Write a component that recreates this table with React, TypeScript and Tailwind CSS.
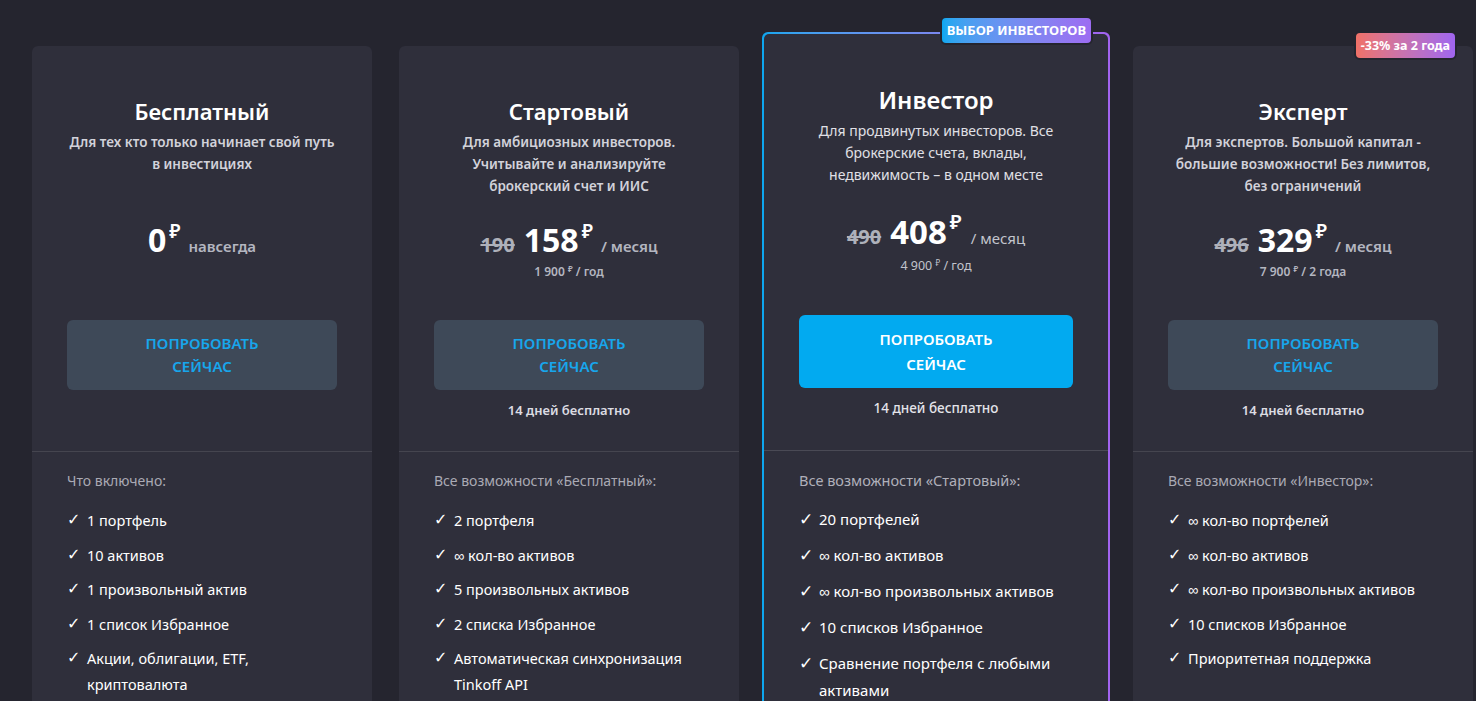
import { Fragment } from "react";

type Plan = {
  name: string;
  desc: string[];
  oldPrice?: string;
  price: string;
  period: string;
  annual?: { sum: string; label: string };
  trial: boolean;
  listTitle: string;
  features: string[][];
  badge?: "discount";
};

const plans: Plan[] = [
  {
    name: "Бесплатный",
    desc: ["Для тех кто только начинает свой путь", "в инвестициях"],
    price: "0",
    period: "навсегда",
    trial: false,
    listTitle: "Что включено:",
    features: [
      ["1 портфель"],
      ["10 активов"],
      ["1 произвольный актив"],
      ["1 список Избранное"],
      ["Акции, облигации, ETF,", "криптовалюта"],
    ],
  },
  {
    name: "Стартовый",
    desc: [
      "Для амбициозных инвесторов.",
      "Учитывайте и анализируйте",
      "брокерский счет и ИИС",
    ],
    oldPrice: "190",
    price: "158",
    period: "/ месяц",
    annual: { sum: "1 900", label: "/ год" },
    trial: true,
    listTitle: "Все возможности «Бесплатный»:",
    features: [
      ["2 портфеля"],
      ["∞ кол-во активов"],
      ["5 произвольных активов"],
      ["2 списка Избранное"],
      ["Автоматическая синхронизация", "Tinkoff API"],
    ],
  },
  {
    name: "Эксперт",
    desc: [
      "Для экспертов. Большой капитал -",
      "большие возможности! Без лимитов,",
      "без ограничений",
    ],
    oldPrice: "496",
    price: "329",
    period: "/ месяц",
    annual: { sum: "7 900", label: "/ 2 года" },
    trial: true,
    listTitle: "Все возможности «Инвестор»:",
    features: [
      ["∞ кол-во портфелей"],
      ["∞ кол-во активов"],
      ["∞ кол-во произвольных активов"],
      ["10 списков Избранное"],
      ["Приоритетная поддержка"],
    ],
    badge: "discount",
  },
];

const featured: Plan = {
  name: "Инвестор",
  desc: [
    "Для продвинутых инвесторов. Все",
    "брокерские счета, вклады,",
    "недвижимость – в одном месте",
  ],
  oldPrice: "490",
  price: "408",
  period: "/ месяц",
  annual: { sum: "4 900", label: "/ год" },
  trial: true,
  listTitle: "Все возможности «Стартовый»:",
  features: [
    ["20 портфелей"],
    ["∞ кол-во активов"],
    ["∞ кол-во произвольных активов"],
    ["10 списков Избранное"],
    ["Сравнение портфеля с любыми", "активами"],
  ],
};

function Lines({ lines }: { lines: string[] }) {
  return (
    <>
      {lines.map((l, i) => (
        <Fragment key={i}>
          {i > 0 && <br />}
          {l}
        </Fragment>
      ))}
    </>
  );
}

function PlanCard({ plan }: { plan: Plan }) {
  return (
    <div className="relative w-[340px] shrink-0 rounded-md bg-[#2f2f3b]">
      {plan.badge === "discount" && (
        <div className="absolute -top-[15px] right-[16px] rounded-md border-2 border-[#25252f] bg-gradient-to-r from-[#f07167] to-[#a065f0] px-[5px] py-[4px] text-[12.5px] font-bold leading-[17px] text-white">
          -33% за 2 года
        </div>
      )}

      <div className="flex h-[405px] flex-col items-center px-[35px] pt-[51px] text-center">
        <h3 className="text-[22px] font-semibold leading-[28px] text-white">
          {plan.name}
        </h3>
        <p className="mt-[6px] h-[66px] text-[13.5px] font-semibold leading-[22px] text-[#d2d2da]">
          <Lines lines={plan.desc} />
        </p>

        <div className="mt-[23px] flex h-[40px] items-baseline justify-center">
          {plan.oldPrice && (
            <span className="mr-[9px] text-[20px] font-bold text-[#aeb1ba] line-through">
              {plan.oldPrice}
            </span>
          )}
          <span className="text-[32px] font-bold leading-[40px] text-white">
            {plan.price}
          </span>
          <span className="relative -top-[14px] ml-[3px] text-[19px] font-semibold leading-none text-white">
            ₽
          </span>
          <span className="ml-[8px] text-[15px] font-semibold text-[#b4b6c0]">
            {plan.period}
          </span>
        </div>
        {plan.annual ? (
          <div className="mt-[4px] h-[16px] text-[12px] font-semibold leading-[16px] text-[#b4b6c0]">
            {plan.annual.sum}{" "}
            <span className="relative -top-[4px] text-[8px]">₽</span>{" "}
            {plan.annual.label}
          </div>
        ) : (
          <div className="mt-[4px] h-[16px]" />
        )}

        <button className="mt-[40px] h-[70px] w-full rounded-md bg-[#3e4958] text-[15px] font-semibold leading-[23px] text-[#17a6ec]">
          ПОПРОБОВАТЬ
          <br />
          СЕЙЧАС
        </button>
        {plan.trial && (
          <div className="mt-[10px] text-[13px] font-semibold leading-[20px] text-[#dcdce2]">
            14 дней бесплатно
          </div>
        )}
      </div>

      <div className="border-t border-[#45454f] px-[35px] pb-[60px] pt-[19px]">
        <div className="text-[14px] leading-[20px] text-[#aaaab4]">
          {plan.listTitle}
        </div>
        <ul className="mt-[16px] flex flex-col gap-[8.5px]">
          {plan.features.map((f, i) => (
            <li
              key={i}
              className="flex text-[14.5px] leading-[26px] text-white"
            >
              <span className="w-[20px] shrink-0 font-['DejaVu_Sans',sans-serif] text-[16px]">
                ✓
              </span>
              <span>
                <Lines lines={f} />
              </span>
            </li>
          ))}
        </ul>
      </div>
    </div>
  );
}

function FeaturedCard({ plan }: { plan: Plan }) {
  return (
    <div className="relative -mx-[4px] -mt-[14px] w-[348px] shrink-0 rounded-md bg-gradient-to-r from-[#0aa6ee] to-[#a263f0] p-[2px]">
      <div className="absolute -top-[16px] right-[17px] rounded-md border-2 border-[#25252f] bg-gradient-to-r from-[#0aa8f0] to-[#9d6cf2] px-[5px] py-[4px] text-[13px] font-bold leading-[17px] text-white">
        ВЫБОР ИНВЕСТОРОВ
      </div>

      <div className="rounded-[5px] bg-[#2f2f3b]">
        <div className="flex h-[416px] flex-col items-center px-[35px] pt-[51px] text-center">
          <h3 className="text-[24px] font-semibold leading-[30px] text-white">
            {plan.name}
          </h3>
          <p className="mt-[5px] h-[66px] text-[14px] font-normal leading-[22px] text-[#e0e0e6]">
            <Lines lines={plan.desc} />
          </p>

          <div className="mt-[25px] flex h-[42px] items-baseline justify-center">
            <span className="mr-[9px] text-[20px] font-bold text-[#aeb1ba] line-through">
              {plan.oldPrice}
            </span>
            <span className="text-[33px] font-bold leading-[42px] text-white">
              {plan.price}
            </span>
            <span className="relative -top-[15px] ml-[3px] text-[20px] font-semibold leading-none text-white">
              ₽
            </span>
            <span className="ml-[9px] text-[15px] text-[#c2c4cc]">
              {plan.period}
            </span>
          </div>
          <div className="mt-[5px] h-[16px] text-[12.5px] leading-[16px] text-[#c2c4cc]">
            {plan.annual?.sum}{" "}
            <span className="relative -top-[4px] text-[8px]">₽</span>{" "}
            {plan.annual?.label}
          </div>

          <button className="mt-[41px] h-[73px] w-full rounded-md bg-[#02aaf0] text-[15px] font-semibold leading-[25px] text-white">
            ПОПРОБОВАТЬ
            <br />
            СЕЙЧАС
          </button>
          <div className="mt-[10px] text-[13.5px] font-medium leading-[20px] text-[#e4e4ea]">
            14 дней бесплатно
          </div>
        </div>

        <div className="border-t border-[#4a4a55] px-[35px] pb-[60px] pt-[19px]">
          <div className="text-[14.5px] leading-[20px] text-[#b0b0ba]">
            {plan.listTitle}
          </div>
          <ul className="mt-[16px] flex flex-col gap-[9px]">
            {plan.features.map((f, i) => (
              <li
                key={i}
                className="flex text-[15px] leading-[27px] text-white"
              >
                <span className="w-[20px] shrink-0 font-['DejaVu_Sans',sans-serif] text-[17px]">
                  ✓
                </span>
                <span>
                  <Lines lines={f} />
                </span>
              </li>
            ))}
          </ul>
        </div>
      </div>
    </div>
  );
}

export default function App() {
  return (
    <div className="h-[701px] overflow-hidden bg-[#25252f] font-['Noto_Sans',sans-serif]">
      <div className="flex items-start gap-[27px] pl-[32px] pt-[46px]">
        <PlanCard plan={plans[0]} />
        <PlanCard plan={plans[1]} />
        <FeaturedCard plan={featured} />
        <PlanCard plan={plans[2]} />
      </div>
    </div>
  );
}
